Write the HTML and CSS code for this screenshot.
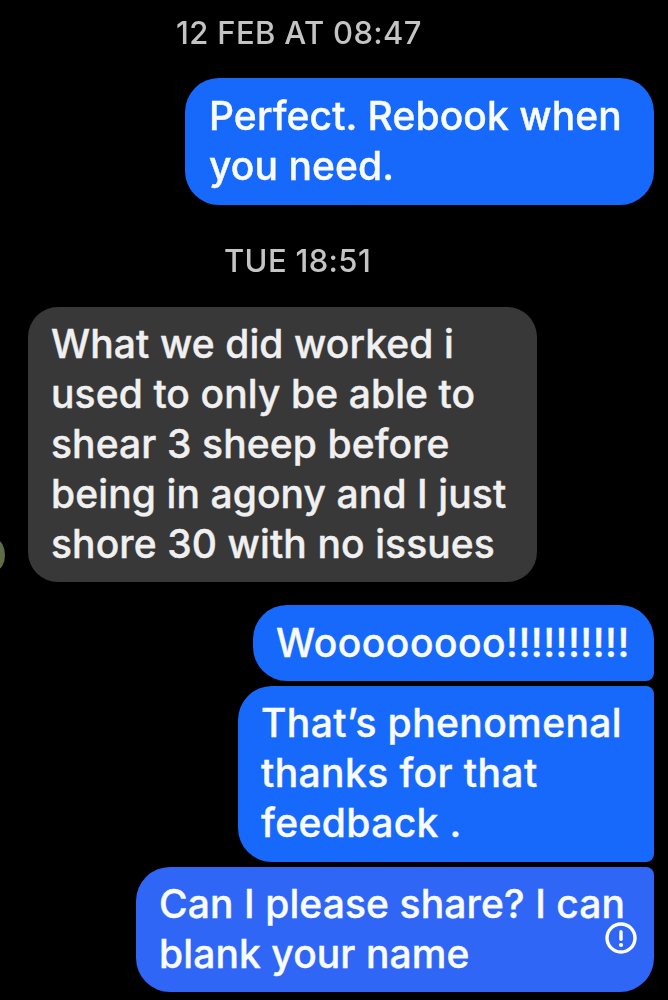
FILE: index.html
```html
<!DOCTYPE html>
<html lang="en">
<head>
<meta charset="utf-8">
<title>Messages</title>
<link rel="stylesheet" href="styles.css">
</head>
<body>
<main class="thread">
  <p class="stamp stamp-first">12 FEB AT 08:47</p>
  <div class="bubble out b1">Perfect. Rebook when<br>you need.</div>
  <p class="stamp stamp-second">TUE 18:51</p>
  <div class="incoming">
    <span class="avatar"></span>
    <div class="bubble in b2">What we did worked i<br>used to only be able to<br>shear 3 sheep before<br>being in agony and I just<br>shore 30 with no issues</div>
  </div>
  <div class="bubble out b3">Woooooooo!!!!!!!!!!</div>
  <div class="bubble out b4">That’s phenomenal<br>thanks for that<br>feedback .</div>
  <div class="bubble out b5">Can I please share? I can<br>blank your name
    <svg class="alert" viewBox="0 0 32 32" aria-hidden="true"><circle cx="16" cy="16" r="14" fill="none" stroke="#fff" stroke-width="3.4"/><rect x="14.3" y="8" width="3.4" height="11" rx="1.7" fill="#fff"/><circle cx="16" cy="23" r="2.1" fill="#fff"/></svg>
  </div>
</main>
</body>
</html>
```
FILE: styles.css
```css
html, body { margin: 0; padding: 0; background: #000; }
body { width: 668px; height: 1000px; overflow: hidden; font-family: Inter, "Liberation Sans", sans-serif; }
.thread { display: flex; flex-direction: column; align-items: flex-end; padding: 0 14px 0 28px; position: relative; height: 1000px; box-sizing: border-box; filter: blur(0.5px); }
.stamp { margin: 0; align-self: flex-start; color: #c4c4c4; font-size: 31px; line-height: 36px; font-weight: 500; letter-spacing: 0.35px; white-space: nowrap; }
.stamp-first { margin: 15px 0 0 148px; }
.stamp-second { margin: 38px 0 0 196px; }
.bubble { box-sizing: border-box; color: #f8fbff; font-size: 39px; line-height: 50px; font-weight: 500; letter-spacing: 0.1px; -webkit-text-stroke: 0.4px currentColor; white-space: nowrap; position: relative; }
.out { background: #1769fb; }
.in { background: #383838; color: #f0f0f0; }
.b1 { width: 469px; height: 127px; margin-top: 27px; padding: 13px 0 0 24px; border-radius: 34px; }
.incoming { align-self: flex-start; margin-top: 28px; }
.b2 { width: 509px; height: 275px; padding: 12px 0 0 23px; border-radius: 30px; }
.avatar { position: absolute; left: -12px; top: 540px; width: 17px; height: 30px; border-radius: 50%; background: #5f6c4a; }
.b3 { width: 401px; height: 76px; margin-top: 23px; padding: 13px 0 0 23px; border-radius: 34px 34px 8px 34px; letter-spacing: 0.5px; }
.b4 { width: 416px; height: 176px; margin-top: 5px; padding: 12px 0 0 23px; border-radius: 34px 8px 8px 34px; letter-spacing: 0.4px; }
.b5 { width: 518px; height: 125px; margin-top: 5px; padding: 12px 0 0 23px; border-radius: 34px 8px 34px 34px; background: #2f66f5; }
.alert { position: absolute; left: 469px; top: 55px; width: 32px; height: 32px; }
```
